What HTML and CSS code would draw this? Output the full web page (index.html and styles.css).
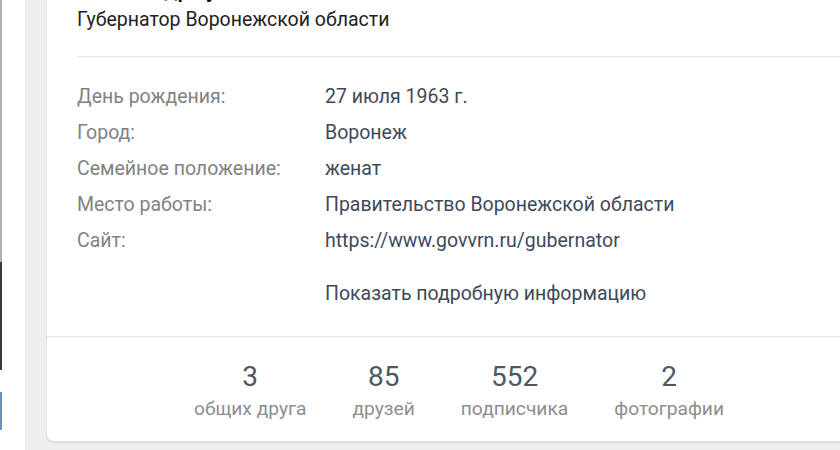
FILE: index.html
```html
<!DOCTYPE html>
<html lang="ru">
<head>
<meta charset="utf-8">
<link rel="stylesheet" href="styles.css">
</head>
<body>
<div class="page">
  <aside class="side">
    <div class="edge">
      <span class="seg seg-gray"></span>
      <span class="seg seg-dark"></span>
      <span class="seg seg-gap"></span>
      <span class="seg seg-blue"></span>
    </div>
  </aside>
  <main class="card">
    <div class="head">
      <div class="name-row">
        <h1 class="name">Александр Гусев</h1>
        <span class="online">онлайн</span>
      </div>
      <div class="status">Губернатор Воронежской области</div>
    </div>
    <div class="sep"></div>
    <dl class="info">
      <dt>День рождения:</dt><dd>27 июля 1963 г.</dd>
      <dt>Город:</dt><dd>Воронеж</dd>
      <dt>Семейное положение:</dt><dd>женат</dd>
      <dt>Место работы:</dt><dd>Правительство Воронежской области</dd>
      <dt>Сайт:</dt><dd>https://www.govvrn.ru/gubernator</dd>
    </dl>
    <div class="more">Показать подробную информацию</div>
    <div class="sep-full"></div>
    <div class="counters">
      <div class="counter"><div class="num">3</div><div class="lbl">общих друга</div></div>
      <div class="counter"><div class="num">85</div><div class="lbl">друзей</div></div>
      <div class="counter"><div class="num">552</div><div class="lbl">подписчика</div></div>
      <div class="counter"><div class="num">2</div><div class="lbl">фотографии</div></div>
    </div>
  </main>
</div>
</body>
</html>
```
FILE: styles.css
```css
html, body {
  margin: 0;
  padding: 0;
}
body {
  width: 840px;
  height: 450px;
  overflow: hidden;
  background: #edeef0;
  font-family: Roboto, "Open Sans", "Noto Sans", sans-serif;
}
.page {
  display: flex;
  gap: 21px;
  height: 450px;
}
.side {
  width: 25px;
  flex: none;
  background: #fff;
  display: flex;
}
.edge {
  width: 2px;
  display: flex;
  flex-direction: column;
}
.seg { display: block; width: 2px; }
.seg-gray { height: 262px; background: #b0b0b0; }
.seg-dark { height: 108px; background: #3a3a3a; }
.seg-gap { height: 22px; background: #fff; }
.seg-blue { height: 38px; background: #6f93b8; }

.card {
  flex: none;
  width: 820px;
  margin-top: -40px;
  height: 482px;
  box-sizing: border-box;
  padding-top: 18px;
  background: #fff;
  border: 1px solid #e3e4e8;
  border-top: none;
  border-radius: 0 0 8px 8px;
  box-shadow: 0 1px 0 0 #d7d8db;
}
.head {
  padding: 0 0 0 30px;
}
.name-row {
  display: flex;
  align-items: baseline;
}
.name {
  margin: 0;
  font-size: 22px;
  line-height: 24px;
  font-weight: 500;
  color: #000;
}
.online {
  margin-left: auto;
  font-size: 15px;
  color: #c5c5c5;
}
.status {
  margin-top: 6px;
  font-size: 19.5px;
  line-height: 24px;
  color: #222;
}
.sep {
  margin: 24px 0 0 30px;
  height: 1px;
  background: #e7e8ec;
}
.info {
  margin: 22px 0 0 30px;
  display: grid;
  grid-template-columns: 248px 1fr;
  font-size: 19.5px;
  line-height: 36px;
}
.info dt {
  color: #828282;
}
.info dd {
  margin: 0;
  color: #3e4a5a;
}
.more {
  margin: 17px 0 0 278px;
  font-size: 19.5px;
  line-height: 36px;
  color: #3e4a5a;
}
.sep-full {
  margin-top: 24px;
  height: 1px;
  background: #e7e8ec;
}
.counters {
  display: flex;
  gap: 46px;
  padding: 24px 0 0 147px;
}
.counter {
  display: flex;
  flex-direction: column;
  align-items: center;
}
.num {
  font-size: 28px;
  line-height: 32px;
  color: #4c5866;
}
.lbl {
  margin-top: 6px;
  font-size: 19.2px;
  line-height: 20px;
  color: #8e8e8e;
}
```
